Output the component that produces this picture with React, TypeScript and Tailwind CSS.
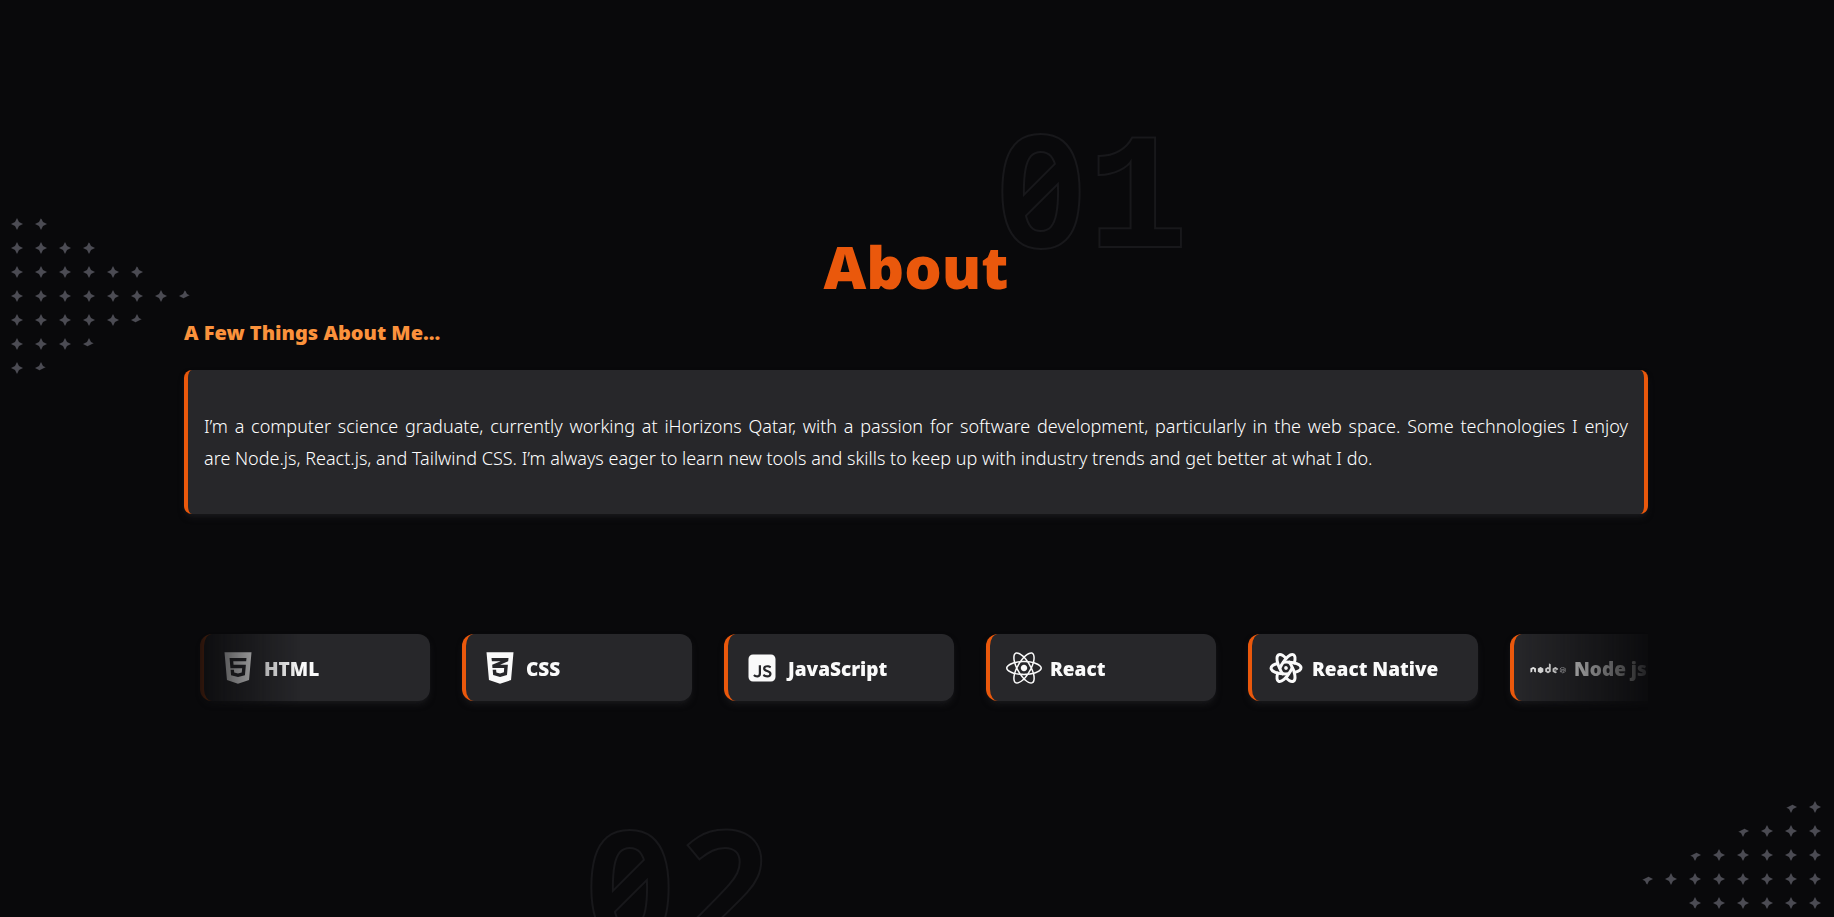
import type { ReactNode } from "react";
import type { IconType } from "react-icons";
import { DiNodejs } from "react-icons/di";
import { FaCss3Alt, FaHtml5, FaReact } from "react-icons/fa";
import { RiJavascriptFill } from "react-icons/ri";
import { TbBrandReactNative } from "react-icons/tb";

type Skill = { name: string; Icon: IconType };

const skills: Skill[] = [
  { name: "HTML", Icon: FaHtml5 },
  { name: "CSS", Icon: FaCss3Alt },
  { name: "JavaScript", Icon: RiJavascriptFill },
  { name: "React", Icon: FaReact },
  { name: "React Native", Icon: TbBrandReactNative },
  { name: "Node js", Icon: DiNodejs },
];

const STAR = "M0 -6 L2 -2 L6 0 L2 2 L0 6 L-2 2 L-6 0 L-2 -2 Z";

type StarFieldProps = {
  id: string;
  clip: string;
  offsetX: number;
  offsetY: number;
  className: string;
};

/* A grid of four-pointed stars, cut to a triangle. */
function StarField({ id, clip, offsetX, offsetY, className }: StarFieldProps) {
  const stars: ReactNode[] = [];
  for (let row = 0; row < 8; row++) {
    for (let col = 0; col < 9; col++) {
      stars.push(
        <path
          key={`${row}-${col}`}
          d={STAR}
          transform={`translate(${offsetX + col * 24} ${offsetY + row * 24})`}
        />,
      );
    }
  }
  return (
    <svg width="194" height="192" viewBox="0 0 194 192" aria-hidden="true" className={className}>
      <defs>
        <clipPath id={id}>
          <polygon points={clip} />
        </clipPath>
      </defs>
      <g clipPath={`url(#${id})`} fill="currentColor">
        {stars}
      </g>
    </svg>
  );
}

/* Large outlined section number; the fill hides the inner half of the stroke. */
function GhostNumber({ children, className }: { children: ReactNode; className: string }) {
  return (
    <div
      aria-hidden="true"
      className={`pointer-events-none absolute grid grid-cols-2 items-baseline text-center text-[#09090b] select-none [-webkit-text-stroke:4px_#18181b] [paint-order:stroke_fill] ${className}`}
    >
      {children}
    </div>
  );
}

function Zero() {
  return (
    <span className="text-[154px] leading-[160px] font-semibold slashed-zero">0</span>
  );
}

function SkillCard({ name, Icon }: Skill) {
  return (
    <li className="flex h-[67px] w-[230px] shrink-0 items-center gap-2 rounded-xl border-l-4 border-[#ea580c] bg-zinc-800 px-4 shadow-md shadow-zinc-900">
      <Icon className="size-9 shrink-0" aria-hidden="true" />
      <span className="pt-0.5 text-[19px] leading-7 font-black whitespace-nowrap">{name}</span>
    </li>
  );
}

export default function App() {
  return (
    <main className="relative min-h-screen overflow-hidden bg-[#09090b] pr-0.5 font-['Noto_Sans','Open_Sans',sans-serif] text-zinc-50">
      <StarField
        id="stars-left"
        clip="0,0 192,96 0,192"
        offsetX={17}
        offsetY={26}
        className="absolute top-[198px] left-0 text-[#4b4b53]"
      />
      <StarField
        id="stars-right"
        clip="0,96 194,-1 194,193"
        offsetX={-17}
        offsetY={-2}
        className="absolute top-[785px] right-0 text-[#4b4b53]"
      />

      <section className="mx-auto w-4/5 max-w-[1464px] pt-[232px]">
        <div className="relative mx-auto w-fit">
          <GhostNumber className="bottom-[18px] left-[170px] w-[190px]">
            <Zero />
            <span className="font-['Liberation_Mono',monospace] text-[164px] leading-[160px] font-bold">1</span>
          </GhostNumber>
          <h2 className="relative text-[59px] leading-[68px] font-black text-[#ea580c]">About</h2>
        </div>

        <h3 className="mt-[19px] text-[20px] leading-7 font-black text-[#fb923c]">
          A Few Things About Me...
        </h3>

        <div className="mt-[23px] rounded-lg border-x-4 border-[#ea580c] bg-zinc-800 px-4 py-10 shadow-md shadow-zinc-900">
          <p className="text-justify text-[18px] leading-8 font-light text-white">
            I’m a computer science graduate, currently working at iHorizons Qatar, with a passion for
            software development, particularly in the web space. Some technologies I enjoy{" "}
            are&nbsp;Node.js, React.js, and Tailwind CSS. I’m always eager to learn new tools and
            skills to keep up with industry trends and get better at what I do.
          </p>
        </div>

        <ul className="mt-[104px] flex gap-8 overflow-hidden p-4 [mask-image:linear-gradient(to_right,transparent,black_8%,black_91%,transparent_101%)]">
          {skills.map((skill) => (
            <SkillCard key={skill.name} {...skill} />
          ))}
        </ul>
      </section>

      <GhostNumber className="top-[802px] left-[582px] w-[192px]">
        <Zero />
        <span className="text-[154px] leading-[160px] font-semibold">2</span>
      </GhostNumber>
    </main>
  );
}
